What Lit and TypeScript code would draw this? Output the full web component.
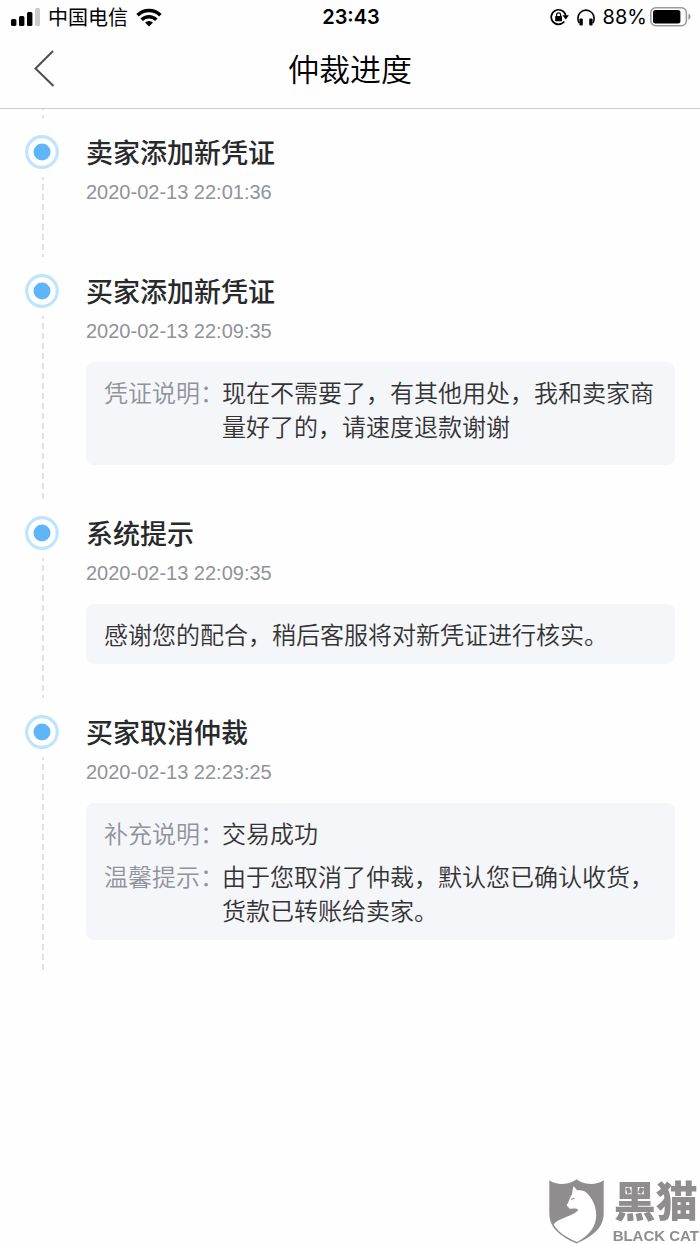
import { LitElement, html, svg, css, nothing } from "lit";
import { customElement, property } from "lit/decorators.js";

interface Row {
  label?: string;
  text: string;
}
interface Step {
  title: string;
  time: string;
  rows: Row[];
  attachments?: boolean;
}

const STEPS: Step[] = [
  { title: "卖家添加新凭证", time: "2020-02-13 22:01:36", rows: [] },
  {
    title: "买家添加新凭证",
    time: "2020-02-13 22:09:35",
    rows: [{ label: "凭证说明：", text: "现在不需要了，有其他用处，我和卖家商量好了的，请速度退款谢谢" }],
    attachments: true,
  },
  {
    title: "系统提示",
    time: "2020-02-13 22:09:35",
    rows: [{ text: "感谢您的配合，稍后客服将对新凭证进行核实。" }],
  },
  {
    title: "买家取消仲裁",
    time: "2020-02-13 22:23:25",
    rows: [
      { label: "补充说明：", text: "交易成功" },
      { label: "温馨提示：", text: "由于您取消了仲裁，默认您已确认收货，货款已转账给卖家。" },
    ],
  },
];

@customElement("status-bar")
export class StatusBar extends LitElement {
  static styles = css`
    :host {
      display: grid;
      grid-template-columns: 1fr auto 1fr;
      align-items: center;
      height: 34px;
      padding: 0 9px 0 11px;
      font-size: 20px;
      line-height: 24px;
      color: #000;
    }
    .side {
      display: flex;
      align-items: center;
    }
    .left {
      gap: 8px;
    }
    .right {
      justify-content: flex-end;
      gap: 8px;
      font-family: Inter, "Liberation Sans", sans-serif;
    }
    .clock {
      font-family: Inter, "Liberation Sans", sans-serif;
      font-weight: 600;
    }
    .power {
      display: flex;
      align-items: center;
      gap: 3px;
    }
    svg {
      display: block;
    }
  `;

  render() {
    return html`
      <div class="side left">
        <svg width="29" height="18" viewBox="0 0 29 18" aria-hidden="true">
          <rect x="0" y="11" width="5.4" height="7" rx="1.5" />
          <rect x="8" y="8" width="5.4" height="10" rx="1.5" />
          <rect x="16" y="4" width="5.4" height="14" rx="1.5" />
          <rect x="24" y="0" width="5" height="18" rx="1.5" fill="#ccc" />
        </svg>
        <span>中国电信</span>
        <svg width="26" height="19" viewBox="0 0 26 19" aria-hidden="true">
          <g fill="none" stroke="#000" stroke-width="3.6">
            <path d="M1.6 7.2a16.2 16.2 0 0 1 22.8 0" />
            <path d="M5.7 11.700a10.400 10.400 0 0 1 14.600 0" />
          </g>
          <path d="M13 18.600l-4-4.100a5.800 5.800 0 0 1 8 0z" />
        </svg>
      </div>
      <time class="clock">23:43</time>
      <div class="side right">
        <svg width="19" height="18" viewBox="0 0 19 18" aria-hidden="true">
          <path d="M14.300 13.600A7.300 7.300 0 1 1 15.700 7.600" fill="none" stroke="#000" stroke-width="1.700" />
          <path d="M12.400 7.200h6.500l-3.100 4.400z" />
          <rect x="5.200" y="8" width="6.800" height="5.200" rx="0.600" />
          <path d="M6.600 8.400V6.800a2 2 0 0 1 4 0v1.600" fill="none" stroke="#000" stroke-width="1.200" />
        </svg>
        <svg width="18" height="17" viewBox="0 0 18 17" aria-hidden="true">
          <path d="M2.200 14.200C1.200 12.600 0.900 11 0.900 9.200A8.100 8.100 0 0 1 17.100 9.200C17.100 11 16.800 12.600 15.800 14.200" fill="none" stroke="#000" stroke-width="1.600" />
          <rect x="2.400" y="9.600" width="3.400" height="6.800" rx="1" />
          <rect x="12.200" y="9.600" width="3.400" height="6.800" rx="1" />
        </svg>
        <div class="power">
          <span>88%</span>
          <svg width="41" height="20" viewBox="0 0 41 20" aria-hidden="true">
            <rect x="0.800" y="0.800" width="35.600" height="18" rx="5" fill="none" stroke="#999" stroke-width="1.500" />
            <rect x="3" y="3" width="27.400" height="13.600" rx="2.500" />
            <path d="M38.400 6.600q2.200 1 2.200 3.200t-2.200 3.200z" fill="#999" />
          </svg>
        </div>
      </div>
    `;
  }
}

@customElement("timeline-step")
export class TimelineStep extends LitElement {
  @property({ attribute: false }) step!: Step;

  static styles = css`
    :host {
      display: grid;
      grid-template-columns: 34px minmax(0, 1fr);
      column-gap: 27px;
      padding: 0 25px;
    }
    .rail {
      display: flex;
      flex-direction: column;
      align-items: center;
      padding-top: 17px;
      gap: 8px;
    }
    .dot {
      display: block;
    }
    .line {
      flex: 1;
      width: 2px;
      margin-left: 2px;
      background: repeating-linear-gradient(#e2e2e5 0 3px, transparent 3px 7px, #e2e2e5 7px 10px);
    }
    .content {
      padding: 16px 0 34px;
    }
    h2 {
      margin: 0;
      font-size: 27px;
      line-height: 36px;
      font-weight: 500;
      color: #28292b;
    }
    time {
      display: block;
      padding: 10px 0 19px;
      font-family: "Liberation Sans", sans-serif;
      font-size: 20px;
      line-height: 24px;
      color: #90939a;
    }
    .card {
      display: flex;
      flex-direction: column;
      gap: 9px;
      padding: 13px 18px;
      border-radius: 8px;
      background: #f5f6fa;
      font-size: 24px;
      line-height: 34px;
      font-weight: 350;
      color: #333;
    }
    .row {
      display: flex;
    }
    .label {
      flex: none;
      width: 118px;
      white-space: nowrap;
      color: #90939a;
    }
    p {
      margin: 0;
    }
  `;

  render() {
    const { title, time, rows, attachments } = this.step;
    return html`
      <div class="rail">
        <svg class="dot" width="34" height="34" viewBox="0 0 34 34" aria-hidden="true">
          <circle cx="17" cy="17" r="15.300" fill="#fff" stroke="#bfe4ff" stroke-width="3.200" />
          <circle cx="17" cy="17" r="8.500" fill="#5eb5fa" />
        </svg>
        <span class="line"></span>
      </div>
      <div class="content">
        <h2>${title}</h2>
        <time>${time}</time>
        ${rows.length
          ? html`<div class="card">
              ${rows.map(
                (r) => html`<div class="row">
                  ${r.label ? html`<span class="label">${r.label}</span>` : nothing}
                  <p>${r.text}</p>
                </div>`
              )}
              ${attachments ? html`<div class="row"></div>` : nothing}
            </div>`
          : nothing}
      </div>
    `;
  }
}

const shield = svg`
  <path fill="#8f8d8e" d="M0.300 1.200C6 5.200 13 5.600 19 4.200C22.500 3.300 25.500 2 27.500 0.200C29.500 2 32.500 3.300 36 4.200C42 5.600 49 5.200 54.700 1.200V34C54.700 49 44 57 27.500 64.500C11 57 0.300 49 0.300 34Z" />
  <path fill="#fff" d="M24.600 7.200C26 8.600 27 10 28 11.200C30 11.200 32.500 11 35 12C41 15.500 47.200 25 47.200 36C47.200 47 41.500 55.500 28 63C17 58.500 8.500 52.500 4.600 45.500C8 39.500 22 38 28.500 32C29.500 30.500 28.500 29.600 26.500 29.600C24 29.400 22 30.200 20.200 29.400C19.500 28 17.600 27.400 17.800 25.600C20 23.500 20.200 19 23 15.500C23.400 12.500 23.600 9.500 24.600 7.200Z" />
  <path d="M22.400 20.800q1-1.600 3-1.400" fill="none" stroke="#8f8d8e" stroke-width="1.200" />`;

@customElement("app-root")
export class AppRoot extends LitElement {
  static styles = css`
    :host {
      display: block;
      min-height: 100vh;
      background: #fefefe;
      font-family: "Noto Sans CJK SC", sans-serif;
    }
    .nav {
      box-sizing: border-box;
      display: grid;
      grid-template-columns: 1fr auto 1fr;
      align-items: center;
      height: 75px;
      padding: 0 32px 6px;
      border-bottom: 1px solid #ccc;
    }
    .back {
      justify-self: start;
      padding: 0;
      border: 0;
      background: none;
    }
    .back svg {
      display: block;
    }
    h1 {
      margin: 0;
      font-size: 31px;
      line-height: 44px;
      font-weight: 350;
      color: #000;
    }
    .stub {
      width: 2px;
      height: 9px;
      margin-left: 42px;
      background: linear-gradient(#e2e2e5 0 1px, transparent 1px 6px, #e2e2e5 6px);
    }
    .mark {
      position: fixed;
      right: 1px;
      bottom: 0;
      display: flex;
      align-items: flex-end;
      gap: 9px;
      color: #8f8d8e;
    }
    .name {
      display: grid;
      justify-items: center;
      row-gap: 3px;
      font-family: "Liberation Sans", "Noto Sans CJK SC", sans-serif;
      font-weight: 900;
    }
    .cn {
      font-size: 42px;
      line-height: 42px;
    }
    .en {
      font-size: 15px;
      line-height: 17px;
    }
  `;

  render() {
    return html`
      <status-bar></status-bar>
      <header class="nav">
        <button class="back" aria-label="返回">
          <svg width="24" height="38" viewBox="0 0 24 38" fill="none" stroke="#4a4d55" stroke-width="2">
            <path d="M21 2L3.500 19.500L21.500 37" />
          </svg>
        </button>
        <h1>仲裁进度</h1>
      </header>
      <main>
        <div class="stub"></div>
        ${STEPS.map((s) => html`<timeline-step .step=${s}></timeline-step>`)}
      </main>
      <div class="mark">
        <svg width="55" height="65" viewBox="0 0 55 65" aria-hidden="true">${shield}</svg>
        <div class="name">
          <span class="cn">黑猫</span>
          <span class="en">BLACK CAT</span>
        </div>
      </div>
    `;
  }
}
